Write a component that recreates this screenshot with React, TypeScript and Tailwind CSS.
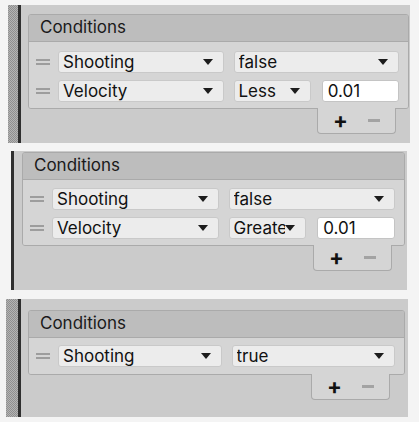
import React from 'react';

type Row = { name: string; value?: string; op?: string; num?: string };

const hatch =
  "bg-[#a2a2a2] bg-[conic-gradient(#8f8f8f_25%,#b4b4b4_0_50%,#8f8f8f_0_75%,#b4b4b4_0)] bg-size-[2px_2px]";

const Arrow = () => (
  <svg width="10" height="7" viewBox="0 0 10 7" className="shrink-0">
    <path d="M0 0 L10 0 L5 6 Z" fill="#1c1c1c" />
  </svg>
);

const Dropdown = ({ label, className = '' }: { label: string; className?: string }) => (
  <div
    className={`flex items-center h-[22px] rounded-[3px] bg-[#ececec] border border-[#c9c9c9] pl-[4px] pr-[10px] text-[#111] ${className}`}
  >
    <span className="flex-1 min-w-0 overflow-hidden whitespace-nowrap leading-[20px]">{label}</span>
    <Arrow />
  </div>
);

const Handle = () => (
  <div className="w-[14px] flex flex-col gap-[2px] shrink-0">
    <div className="h-[2px] bg-[#9d9d9d]" />
    <div className="h-[2px] bg-[#9d9d9d]" />
  </div>
);

const ConditionRow = ({ row }: { row: Row }) => (
  <div className="flex items-center">
    <div className="w-[22px] flex justify-start">
      <Handle />
    </div>
    <div className="flex-1 grid grid-cols-2 gap-[10px]">
      <Dropdown label={row.name} />
      {row.op ? (
        <div className="grid grid-cols-2 gap-[11px]">
          <Dropdown label={row.op} className="pr-[7px]" />
          <div className="h-[22px] rounded-[3px] bg-white border border-[#c4c4c4] flex items-center pl-[5px] leading-[20px] text-[#111]">
            {row.num}
          </div>
        </div>
      ) : (
        <Dropdown label={row.value ?? ''} />
      )}
    </div>
  </div>
);

interface PanelProps {
  rows: Row[];
  stripe: string;
  outer: string;
  inner: string;
  bodyPad: string;
  tabMargin: string;
}

const Panel: React.FC<PanelProps> = ({ rows, stripe, outer, inner, bodyPad, tabMargin }) => (
  <div className={`flex bg-[#cbcbcb] ${outer}`}>
    {stripe && <div className={`${stripe} ${hatch}`} />}
    <div className="w-[3px] bg-[#2f2f2f]" />
    <div className={`flex-1 ${inner}`}>
      <div className="border border-[#aaaaaa] rounded-[3px] overflow-hidden">
        <div className="h-[27px] bg-[#bdbdbd] border-b border-[#aaaaaa] flex items-center pl-[11px] text-[17px] text-[#1a1a1a]">
          Conditions
        </div>
        <div className={`bg-[#d5d5d5] flex flex-col gap-[7px] pl-[7px] pr-[9px] ${bodyPad}`}>
          {rows.map((r, i) => (
            <ConditionRow key={i} row={r} />
          ))}
        </div>
      </div>
      <div className={`flex justify-end ${tabMargin}`}>
        <div className="w-[79px] h-[26px] -mt-px bg-[#d5d5d5] border border-[#aaaaaa] border-t-0 rounded-b-[4px] flex items-center justify-center gap-[20px]">
          <span className="text-[22px] font-bold leading-none text-[#111] -mt-[2px]">+</span>
          <span className="w-[12px] h-[3px] bg-[#a3a3a3]" />
        </div>
      </div>
    </div>
  </div>
);

export default function App() {
  return (
    <div className="w-[419px] h-[422px] bg-[#f4f4f4] pt-[5px] font-['Inter',sans-serif] text-[17px] flex flex-col">
      <Panel
        rows={[
          { name: 'Shooting', value: 'false' },
          { name: 'Velocity', op: 'Less', num: '0.01' },
        ]}
        stripe="w-[10px]"
        outer="ml-[8px] w-[402px] h-[138px]"
        inner="pl-[7px] pr-[1px] pt-[9px]"
        bodyPad="pt-[9px] pb-[6px]"
        tabMargin="mr-[13px]"
      />
      <Panel
        rows={[
          { name: 'Shooting', value: 'false' },
          { name: 'Velocity', op: 'Greater', num: '0.01' },
        ]}
        stripe=""
        outer="ml-[11px] w-[396px] h-[139px] mt-[8px]"
        inner="pl-[8px] pr-[2px] pt-[1px]"
        bodyPad="pt-[8px] pb-[6px]"
        tabMargin="mr-[13px]"
      />
      <Panel
        rows={[{ name: 'Shooting', value: 'true' }]}
        stripe="w-[12px]"
        outer="ml-[6px] w-[402px] h-[118px] mt-[9px]"
        inner="pl-[7px] pr-[3px] pt-[11px]"
        bodyPad="pt-[7px] pb-[7px]"
        tabMargin="mr-[15px]"
      />
    </div>
  );
}
